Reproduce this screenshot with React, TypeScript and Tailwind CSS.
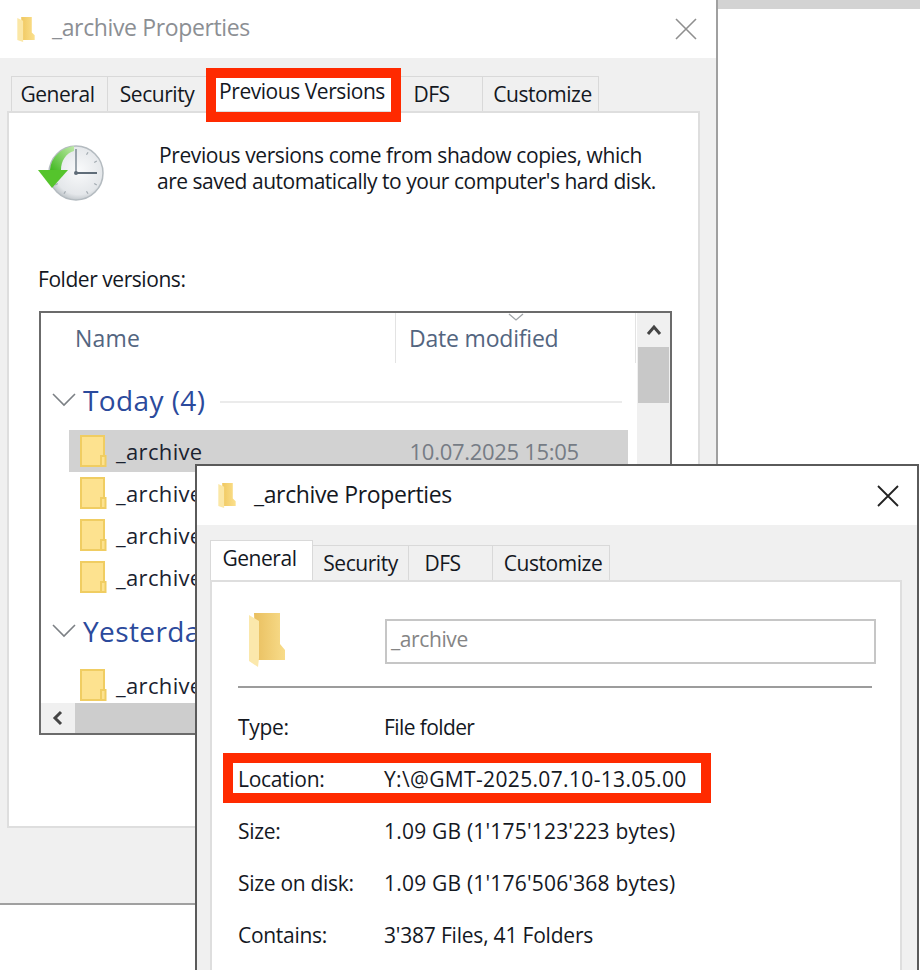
const font = "font-['Open_Sans','Liberation_Sans',sans-serif]";

function TinyFolder({ className }: { className: string }) {
  return (
    <svg viewBox="0 0 20 28" className={className}>
      <defs>
        <linearGradient id="tf" x1="0" x2="1" y1="0" y2="0">
          <stop offset="0" stopColor="#f0c860" />
          <stop offset="1" stopColor="#fbe08d" />
        </linearGradient>
      </defs>
      <path d="M5 1 H16 V17 L19 20 V25 H6 Z" fill="url(#tf)" />
      <path d="M1 2 L7 5 V27 L1 25 Z" fill="#fbe7a6" />
    </svg>
  );
}

function BigFolder() {
  return (
    <svg viewBox="0 0 38 56" className="h-14 w-[38px]">
      <defs>
        <linearGradient id="bf" x1="0" x2="1" y1="0" y2="0">
          <stop offset="0" stopColor="#e9bf5f" />
          <stop offset="1" stopColor="#f8dc8a" />
        </linearGradient>
      </defs>
      <path d="M6 1 H32 V32 L37 38 V48 H8 Z" fill="url(#bf)" />
      <path d="M1 3 L11 9 V46 L10 55 L1 49 Z" fill="#fbe8ac" />
    </svg>
  );
}

function ListFolder() {
  return (
    <svg viewBox="0 0 27 32" className="h-8 w-[27px] shrink-0">
      <path d="M1 1 H24 V31 H1 Z" fill="#fde28f" stroke="#f0cd62" strokeWidth="2" />
      <path d="M21 31 V21 H25.5 V31 Z" fill="#fde28f" stroke="#f0cd62" strokeWidth="2" />
    </svg>
  );
}

function Clock() {
  const ticks = [30, 60, 120, 150, 210, 240, 300, 330];
  return (
    <svg viewBox="0 0 68 60" className="h-[60px] w-[68px] shrink-0">
      <defs>
        <radialGradient id="cf" cx="0.55" cy="0.45" r="0.6">
          <stop offset="0" stopColor="#f9fafb" />
          <stop offset="0.75" stopColor="#e4e7ea" />
          <stop offset="1" stopColor="#b4bbc0" />
        </radialGradient>
        <linearGradient id="ca" x1="0" x2="1" y1="1" y2="0">
          <stop offset="0" stopColor="#3fb81f" />
          <stop offset="1" stopColor="#bfe9a8" />
        </linearGradient>
      </defs>
      <circle cx="39" cy="30" r="27" fill="url(#cf)" stroke="#b4bbc0" strokeWidth="1.5" />
      {ticks.map((a) => (
        <rect key={a} x="38.4" y="6" width="1.2" height="3" fill="#a3abb1" transform={`rotate(${a} 39 30)`} />
      ))}
      <path d="M39 6 V30" stroke="#76838e" strokeWidth="1.4" />
      <path d="M39 30 H60" stroke="#5f6c78" strokeWidth="2" />
      <circle cx="39" cy="30" r="2" fill="#5f6c78" />
      <path d="M13 27 C14 14 24 5 37 3 V8 C29 10 24 18 24 27 Z" fill="url(#ca)" />
      <path d="M1 27 H31 L15 45 Z" fill="#55c42c" />
    </svg>
  );
}

function Tab({ label, w, active, down, nudge }: { label: string; w: string; active?: boolean; down?: boolean; nudge?: boolean }) {
  return (
    <div
      className={`flex shrink-0 items-center justify-center whitespace-nowrap border-[#d9d9d9] first:pr-1 last:pl-1 ${w} ${
        active ? "h-[40px] border border-b-0 bg-white" : "h-[35px] border border-b-0 border-l-0 bg-[#f0f0f0] pt-[2px] first:border-l"
      } ${down ? "pb-1" : ""} ${nudge ? "pr-4" : ""}`}
    >
      {label}
    </div>
  );
}

function ListRow({ selected }: { selected?: boolean }) {
  return (
    <div className={`flex h-[42px] w-[559px] items-center gap-[9px] pl-[11px] text-[22px] tracking-[0.35px] text-[#1a2230] ${selected ? "bg-[#d2d2d2]" : ""}`}>
      <ListFolder />
      <span>_archive</span>
      {selected && <span className="ml-[198px] text-[22px] tracking-[-0.3px] text-[#767c85]">10.07.2025 15:05</span>}
    </div>
  );
}

function GroupHead({ label, line }: { label: string; line?: boolean }) {
  return (
    <div className="flex items-center">
      <svg viewBox="0 0 24 14" className="ml-[11px] h-[14px] w-6 shrink-0">
        <path d="M1 1 L12 12 L23 1" fill="none" stroke="#7c8085" strokeWidth="1.6" />
      </svg>
      <span className="ml-[7px] text-[28px] leading-[38px] tracking-[0.4px] text-[#2b4a9c]">{label}</span>
      {line && <div className="ml-[15px] mt-[3px] h-[2px] w-[402px] bg-[#ebebeb]" />}
    </div>
  );
}

function Prop({ k, v, kt, vt }: { k: string; v: string; kt: string; vt: string }) {
  return (
    <div className="flex h-[52px] items-center whitespace-nowrap text-[21px] text-[#14181f]">
      <span className={`w-[146px] ${kt}`}>{k}</span>
      <span className={vt}>{v}</span>
    </div>
  );
}

export default function App() {
  return (
    <div className={`relative h-[970px] w-[920px] overflow-hidden bg-white ${font}`}>
      <div className="absolute right-0 top-0 h-[9px] w-[202px] bg-[#d3d3d3]" />

      {/* Back window */}
      <div className="absolute left-0 top-0 flex h-[905px] w-[718px] flex-col border-b-2 border-r-2 border-[#a0a0a0] bg-[#f0f0f0]">
        <div className="flex h-[58px] items-center bg-white pl-[16px]">
          <TinyFolder className="h-[27px] w-[20px]" />
          <span className="ml-[16px] -translate-y-[2px] text-[23px] tracking-[-0.37px] text-[#8c8f94]">_archive Properties</span>
          <svg viewBox="0 0 22 22" className="ml-auto mr-[19px] h-[22px] w-[22px]">
            <path d="M1 1 L21 21 M21 1 L1 21" stroke="#8f8f8f" strokeWidth="1.6" />
          </svg>
        </div>
        <div className="ml-[11px] mt-[13px] flex items-end text-[21px] tracking-[-0.45px] text-[#14181f]">
          <Tab label="General" w="w-[97px]" />
          <Tab label="Security" w="w-[99px]" />
          <Tab label="Previous Versions" w="w-[190px]" active />
          <Tab label="DFS" w="w-[86px]" nudge />
          <Tab label="Customize" w="w-[116px]" />
        </div>
        <div className="ml-[7px] h-[717px] w-[693px] border-2 border-[#dedede] bg-white">
          <div className="ml-[28px] mt-[30px] flex">
            <Clock />
            <p className="ml-[54px] mt-[-1px] whitespace-nowrap text-[21px] leading-[26px] tracking-[-0.4px] text-[#14181f]">
              Previous versions come from shadow copies, which
              <br />
              <span className="-ml-[2px] tracking-[-0.48px]">are saved automatically to your computer's hard disk.</span>
            </p>
          </div>
          <div className="ml-[29px] mt-[60px] text-[21px] leading-8 tracking-[-0.45px] text-[#14181f]">Folder versions:</div>
          <div className="ml-[30px] mt-[16px] flex h-[424px] w-[633px] overflow-hidden border-2 border-[#6b6b6b]">
            <div className="relative w-[596px] shrink-0">
              <svg viewBox="0 0 16 8" className="absolute left-[467px] top-0 h-2 w-4">
                <path d="M1 1 L8 7 L15 1" fill="none" stroke="#a0a4a8" strokeWidth="1.3" />
              </svg>
              <div className="flex h-[50px] items-center whitespace-nowrap text-[23px] tracking-[0.2px] text-[#53657f]">
                <span className="ml-[34px] w-[320px] shrink-0">Name</span>
                <div className="h-[50px] w-px shrink-0 bg-[#e3e3e3]" />
                <span className="ml-[13px] w-[226px] shrink-0 tracking-[-0.2px]">Date modified</span>
                <div className="h-[50px] w-px shrink-0 bg-[#e3e3e3]" />
              </div>
              <div className="mt-[18px]">
                <GroupHead label="Today (4)" line />
              </div>
              <div className="ml-[28px] mt-[11px]">
                <ListRow selected />
                <ListRow />
                <ListRow />
                <ListRow />
              </div>
              <div className="mt-[14px]">
                <GroupHead label="Yesterday" />
              </div>
              <div className="ml-[28px] mt-[14px]">
                <ListRow />
              </div>
              <div className="absolute bottom-0 left-0 flex h-[30px] w-[596px] bg-[#f0f0f0]">
                <div className="flex w-[34px] items-center justify-center">
                  <svg viewBox="0 0 12 16" className="h-4 w-3">
                    <path d="M9 2 L3 8 L9 14" fill="none" stroke="#444" strokeWidth="3" />
                  </svg>
                </div>
                <div className="w-[300px] bg-[#cdcdcd]" />
              </div>
            </div>
            <div className="flex w-[33px] flex-col bg-[#f0f0f0]">
              <div className="flex h-[34px] items-center justify-center">
                <svg viewBox="0 0 16 12" className="h-3 w-4">
                  <path d="M2 10 L8 3 L14 10" fill="none" stroke="#444" strokeWidth="3" />
                </svg>
              </div>
              <div className="mx-[1px] h-[56px] bg-[#c8c8c8]" />
            </div>
          </div>
        </div>
        <div className="absolute left-[206px] top-[68px] h-[54px] w-[195px] border-[10px] border-[#ff2a00]" />
      </div>

      {/* Front window */}
      <div className="absolute left-[195px] top-[464px] flex h-[520px] w-[724px] flex-col border-2 border-[#5a5a5a] bg-[#f0f0f0]">
        <div className="flex h-[59px] items-center bg-white pl-[20px]">
          <TinyFolder className="h-[27px] w-[20px]" />
          <span className="ml-[17px] -translate-y-[1px] text-[23px] tracking-[-0.37px] text-[#14181f]">_archive Properties</span>
          <svg viewBox="0 0 22 22" className="ml-auto mr-[18px] h-[22px] w-[22px]">
            <path d="M1 1 L21 21 M21 1 L1 21" stroke="#222" strokeWidth="1.8" />
          </svg>
        </div>
        <div className="ml-[13px] mt-[15px] flex items-end text-[21px] tracking-[-0.45px] text-[#14181f]">
          <Tab label="General" w="w-[103px]" active down />
          <Tab label="Security" w="w-[96px]" />
          <Tab label="DFS" w="w-[84px]" nudge />
          <Tab label="Customize" w="w-[117px]" />
        </div>
        <div className="ml-[13px] h-[400px] w-[692px] border-2 border-b-0 border-[#dedede] bg-white">
          <div className="flex h-[104px] items-start pl-[36px] pt-[30px]">
            <BigFolder />
            <div className="ml-[99px] mt-[7px] flex h-[45px] w-[491px] items-center border-2 border-[#c6c6c6] pb-1 pl-[4px] text-[21px] tracking-[-0.4px] text-[#858585]">_archive</div>
          </div>
          <div className="ml-[26px] h-[2px] w-[634px] bg-[#9c9c9c]" />
          <div className="relative ml-[26px] mt-[14px]">
            <Prop k="Type:" v="File folder" kt="tracking-[-0.3px]" vt="tracking-[-0.6px]" />
            <Prop k="Location:" v="Y:\@GMT-2025.07.10-13.05.00" kt="tracking-[-0.3px]" vt="tracking-[0.35px]" />
            <Prop k="Size:" v="1.09 GB (1'175'123'223 bytes)" kt="tracking-[-0.3px]" vt="tracking-[0.2px]" />
            <Prop k="Size on disk:" v="1.09 GB (1'176'506'368 bytes)" kt="tracking-[-0.3px]" vt="tracking-[0.2px]" />
            <Prop k="Contains:" v="3'387 Files, 41 Folders" kt="tracking-[-0.3px]" vt="tracking-[-0.2px]" />
            <div className="absolute left-[-15px] top-[51px] h-[50px] w-[488px] border-[10px] border-[#ff2a00]" />
          </div>
        </div>
      </div>
    </div>
  );
}
